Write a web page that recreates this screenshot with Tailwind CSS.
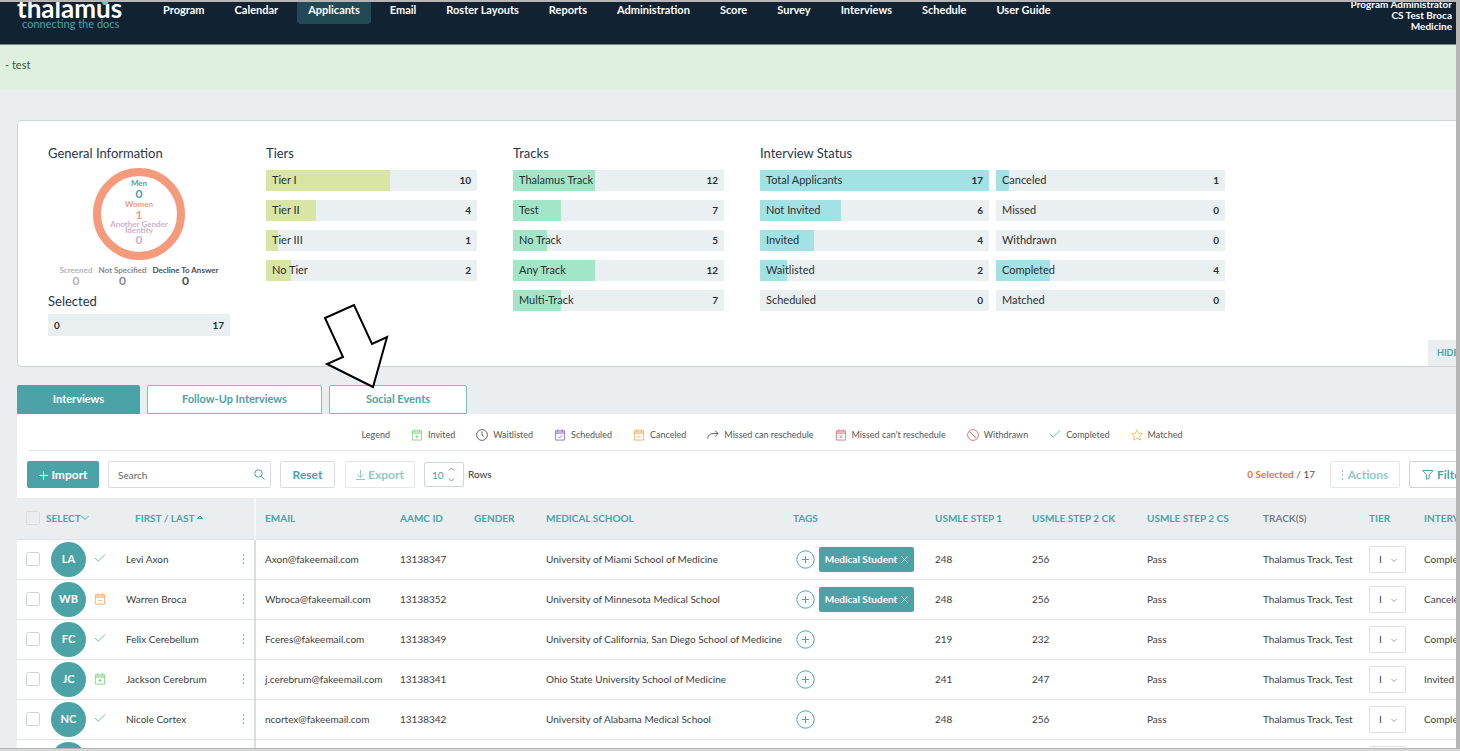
<!DOCTYPE html>
<html lang="en">
<head>
  <meta charset="UTF-8" />
  <meta name="viewport" content="width=device-width, initial-scale=1.0"/>
  <title>Thalamus - Applicants</title>
  <script src="https://cdn.jsdelivr.net/npm/@tailwindcss/browser@4"></script>
</head>
<body class="h-screen overflow-hidden border-b-2 border-[#d6d6d6] bg-[#b6b6b6] pt-[2px] pr-1 pb-px font-['Lato',sans-serif] text-[10px] text-[#3c3c3c]">

<!-- icons -->
<svg class="hidden">
  <symbol id="i-cal" viewBox="0 0 12 13"><path d="M1 2h10v10H1zM1 4.500h10M3.500 .3V3M8.500 .3V3"/><path d="M1 2h10v2.500H1z" fill="currentColor" fill-opacity=".3" stroke="none"/></symbol>
  <symbol id="i-invited" viewBox="0 0 12 13"><use href="#i-cal"/><path d="M6 6.300v4M4 8.300h4"/></symbol>
  <symbol id="i-scheduled" viewBox="0 0 12 13"><use href="#i-cal"/><path d="M4 8.200l1.500 1.500L8.300 6.800"/></symbol>
  <symbol id="i-canceled" viewBox="0 0 12 13"><use href="#i-cal"/><path d="M4 8.300h4"/></symbol>
  <symbol id="i-noresched" viewBox="0 0 12 13"><use href="#i-cal"/><path d="M4.500 6.800l3 3M7.500 6.800l-3 3"/></symbol>
  <symbol id="i-waitlisted" viewBox="0 0 12 12"><circle cx="6" cy="6" r="5.400"/><path d="M6 2.500V6l2 1.500"/></symbol>
  <symbol id="i-missed" viewBox="0 0 12 12"><path d="M.6 9.500C1 6 3.500 4.500 7 4.500h4M8 1.500l3.200 3L8 7.500"/></symbol>
  <symbol id="i-withdrawn" viewBox="0 0 12 12"><circle cx="6" cy="6" r="5.400"/><path d="M2.200 2.200l7.600 7.600"/></symbol>
  <symbol id="i-completed" viewBox="0 0 12 12"><path d="M1 5l3.200 3.200L11 1.500"/></symbol>
  <symbol id="i-matched" viewBox="0 0 12 12"><path d="M6 .8l1.600 3.400 3.800.4-2.800 2.600.8 3.900L6 9.200l-3.400 1.900.8-3.900L.6 4.600l3.800-.4z"/></symbol>
</svg>

<div class="h-full overflow-hidden bg-[#eaeef0]">

  <header class="flex h-[43px] items-start border-b border-[#6f8a80] bg-[#112233] font-bold text-white">
    <div class="relative ml-[17px] w-[135px]">
      <div class="-mt-[6px] text-[26px] leading-[25px]">thalamus</div>
      <div class="-mt-[3px] ml-[5px] text-[11px] leading-[12px] font-normal text-[#4ba3a7]">connecting the docs</div>
      <span class="absolute top-0 left-[85px] h-[3px] w-[6px] rounded-b-full bg-[#6fc3c8]"></span>
    </div>
    <nav class="flex gap-2 text-[11px] leading-4">
      <a href="#" class="px-[11px] pb-[6px]">Program</a>
      <a href="#" class="px-[11px] pb-[6px]">Calendar</a>
      <a href="#" class="rounded-b-sm bg-[#234856] px-[11px] pb-[6px]">Applicants</a>
      <a href="#" class="px-[11px] pb-[6px]">Email</a>
      <a href="#" class="px-[11px] pb-[6px]">Roster Layouts</a>
      <a href="#" class="px-[11px] pb-[6px]">Reports</a>
      <a href="#" class="px-[11px] pb-[6px]">Administration</a>
      <a href="#" class="px-[11px] pb-[6px]">Score</a>
      <a href="#" class="px-[11px] pb-[6px]">Survey</a>
      <a href="#" class="px-[11px] pb-[6px]">Interviews</a>
      <a href="#" class="px-[11px] pb-[6px]">Schedule</a>
      <a href="#" class="px-[11px] pb-[6px]">User Guide</a>
    </nav>
    <div class="-mt-[3px] mr-1 ml-auto text-right text-[10px] leading-[11px]">Program Administrator<br>CS Test Broca<br>Medicine</div>
  </header>

  <div class="flex h-[45px] items-center bg-[#dff1de] px-[5px] pb-1 text-[11px] text-[#2f5a3c]">- test</div>

  <main class="min-w-[1544px] px-[17px] pt-[30px]">

    <section class="relative flex h-[247px] rounded border border-[#cdd3d7] bg-white pt-6 pl-[30px] text-[11px] text-[#2b2f33]">
      <div class="mr-9 w-[182px]">
        <h2 class="text-[13px] leading-4 text-[#26364a]">General Information</h2>
        <div class="mx-auto mt-[7px] flex h-[92px] w-[92px] flex-col items-center rounded-full border-8 border-[#f59a7b] pt-[3px] text-center text-[8px] leading-[8px] font-bold whitespace-nowrap">
          <div class="text-[#4ba3a7]">Men<div class="text-[12px] leading-[13px]">0</div></div>
          <div class="text-[#f59a7b]">Women<div class="text-[12px] leading-[13px]">1</div></div>
          <div class="leading-[6px] text-[#cdb0d0]">Another Gender<br>Identity<div class="text-[12px] leading-[13px]">0</div></div>
        </div>
        <div class="mt-[5px] flex justify-center gap-[6px] text-center text-[8px] leading-[10px] font-bold">
          <div class="text-[#b0b3b6]">Screened<div class="text-[12px] leading-[11px]">0</div></div>
          <div class="text-[#85888b]">Not Specified<div class="text-[12px] leading-[11px]">0</div></div>
          <div class="text-[#4a4d50]">Decline To Answer<div class="text-[12px] leading-[11px]">0</div></div>
        </div>
        <h2 class="mt-[7px] text-[13px] leading-4 text-[#26364a]">Selected</h2>
        <div class="mt-[5px] flex h-[22px] items-center justify-between bg-[#eaeff2] px-[6px] text-[10px] font-bold"><span>0</span><span>17</span></div>
      </div>
      <div class="mr-9 w-[211px]">
        <h2 class="text-[13px] leading-4 text-[#26364a]">Tiers</h2>
        <div id="tiers" class="mt-[9px] grid gap-[9px]"></div>
      </div>
      <div class="mr-9 w-[211px]">
        <h2 class="text-[13px] leading-4 text-[#26364a]">Tracks</h2>
        <div id="tracks" class="mt-[9px] grid gap-[9px]"></div>
      </div>
      <div class="w-[465px]">
        <h2 class="text-[13px] leading-4 text-[#26364a]">Interview Status</h2>
        <div id="statuses" class="mt-[9px] grid grid-flow-col grid-cols-2 grid-rows-5 gap-x-[7px] gap-y-[9px]"></div>
      </div>
      <button class="absolute right-0 bottom-0 h-[26px] w-[98px] bg-[#eaeef0] pl-[9px] text-left text-[9px] font-bold text-[#4ba3a7]">HIDE METRICS</button>

      <!-- pointer to the Social Events tab -->
      <svg class="absolute top-[182px] left-[305px]" width="66" height="87" fill="#fff" stroke="#000" stroke-width="2">
        <path d="M2 15L31 2l18 39 15-7-14 50L4 61l16-7z"/>
      </svg>
    </section>

    <div class="mt-[18px] flex gap-[7px] text-[11px] font-bold">
      <button class="h-[29px] w-[123px] rounded-t-xs bg-[#4ba3a7] text-white">Interviews</button>
      <button class="h-[29px] w-[175px] rounded-t-xs border border-[#7fbcbf] bg-white text-[#4ba3a7]">Follow-Up Interviews</button>
      <button class="h-[29px] w-[138px] rounded-t-xs border border-[#7fbcbf] bg-white text-[#4ba3a7]">Social Events</button>
    </div>

    <section class="bg-white">
      <div id="legend" class="mx-[10px] flex h-[37px] items-center justify-center gap-[21px] border-b border-[#e3e6e9] pt-[5px] text-[9px] text-[#555]">
        <span>Legend</span>
      </div>

      <div class="flex h-[47px] items-center px-[10px] text-[12px] font-bold text-[#4ba3a7]">
        <button class="flex h-[27px] w-[72px] items-center justify-center gap-[3px] rounded-xs bg-[#4ba3a7] text-white">
          <svg width="10" height="10" fill="none" stroke="currentColor" stroke-opacity=".8"><path d="M5.500 1v9M1 5.500h9"/></svg>Import
        </button>
        <div class="relative ml-[9px]">
          <input type="text" placeholder="Search" aria-label="Search" class="h-[27px] w-[163px] rounded-xs border border-[#d8dce0] pl-[9px] text-[10px] font-normal placeholder:text-[#666]">
          <svg class="absolute top-2 right-[6px]" width="11" height="11" fill="none" stroke="currentColor"><circle cx="4.500" cy="4.500" r="3.700"/><path d="M7.300 7.300l3.200 3.200"/></svg>
        </div>
        <button class="ml-[9px] h-[27px] w-[55px] rounded-xs border border-[#d8dce0]">Reset</button>
        <button disabled class="ml-[10px] flex h-[27px] w-[70px] items-center justify-center gap-[3px] rounded-xs border border-[#e4e7ea] text-[#93c8ca]">
          <svg width="9" height="10" fill="none" stroke="currentColor"><path d="M4.500 0v7.500M1.500 4.500l3 3 3-3M0 9.500h9"/></svg>Export
        </button>
        <div class="relative ml-[9px]">
          <input id="rows" type="text" value="10" class="h-[25px] w-10 rounded-xs border border-[#cfd4d8] pl-[7px] text-[10px] font-normal">
          <svg class="absolute top-[5px] right-[9px]" width="7" height="15" fill="none" stroke="#888"><path d="M1 3.500l2.500-2.500L6 3.500M1 11.500L3.500 14 6 11.500"/></svg>
        </div>
        <label for="rows" class="ml-1 text-[10px] font-normal text-[#333]">Rows</label>
        <div class="ml-auto text-[10px] font-normal text-[#555]"><span class="font-bold text-[#e8733d]">0 Selected</span> / 17</div>
        <button disabled class="ml-[15px] flex h-[27px] w-[70px] items-center justify-center gap-1 rounded-xs border border-[#e4e7ea] text-[#93c8ca]">
          <svg width="2" height="10" fill="currentColor"><path d="M0 0h1v2H0zM0 4h1v2H0zM0 8h1v2H0z"/></svg>Actions
        </button>
        <button class="ml-[9px] flex h-[27px] w-[108px] items-center gap-[3px] rounded-xs border border-[#cfd4d8] pl-3">
          <svg width="12" height="10" fill="none" stroke="currentColor"><path d="M.8.500h10.200L7.200 5v3.500l-2.600.8V5z"/></svg>Filter Options
        </button>
      </div>

      <table class="w-full table-fixed text-left whitespace-nowrap">
        <colgroup>
          <col class="w-[99px]"><col class="w-[139px]"><col class="w-[136px]"><col class="w-[74px]"><col class="w-[72px]">
          <col class="w-[247px]"><col class="w-[142px]"><col class="w-[97px]"><col class="w-[115px]"><col class="w-[116px]">
          <col class="w-[106px]"><col class="w-[55px]"><col class="w-[112px]">
        </colgroup>
        <thead class="bg-[#eaeef0] text-[10px] font-bold text-[#4ba3a7]">
          <tr class="h-[41px] border-b border-[#dfe3e6]">
            <th class="pl-[9px]">
              <div class="flex items-center">
                <input type="checkbox" aria-label="Select all" class="mr-[6px] h-[14px] w-[14px] appearance-none rounded-xs border border-[#d8dce0]">
                SELECT
                <svg width="8" height="6" fill="none" stroke="currentColor"><path d="M.5 1L4 4.500 7.500 1"/></svg>
              </div>
            </th>
            <th class="border-r-2 border-[#f6f8f9] pl-[19px]">FIRST / LAST <svg class="-mt-1 inline" width="6" height="5" fill="none" stroke="currentColor"><path d="M.5 3.500h5L3 1z"/></svg></th>
            <th class="pl-[9px]">EMAIL</th>
            <th class="pl-[9px]">AAMC ID</th>
            <th class="pl-[9px]">GENDER</th>
            <th class="pl-[9px]">MEDICAL SCHOOL</th>
            <th class="pl-[9px]">TAGS</th>
            <th class="pl-[9px]">USMLE STEP 1</th>
            <th class="pl-[9px]">USMLE STEP 2 CK</th>
            <th class="pl-[9px]">USMLE STEP 2 CS</th>
            <th class="pl-[9px] text-[#7b7f83]">TRACK(S)</th>
            <th class="pl-[9px]">TIER</th>
            <th class="pl-[9px]">INTERVIEW STATUS</th>
          </tr>
        </thead>
        <tbody id="applicants"></tbody>
      </table>
    </section>
  </main>
</div>

<script>
  const bar = (label, count, pct, color) => `
    <div class="flex h-[21px] bg-[#eaeff2]">
      <div class="${color} h-full shrink-0" style="width:${pct}%"></div>
      <div class="flex w-full shrink-0 items-center justify-between px-[6px]" style="margin-left:-${pct}%">
        <span>${label}</span><span class="text-[10px] font-bold">${count}</span>
      </div>
    </div>`;

  const fill = (id, total, color, items) => {
    document.getElementById(id).innerHTML = items.map(([l, n]) => bar(l, n, n / total * 100, color)).join('');
  };

  fill('tiers', 17, 'bg-[#d8e5a4]', [['Tier I', 10], ['Tier II', 4], ['Tier III', 1], ['No Tier', 2]]);
  fill('tracks', 31, 'bg-[#a2e5c7]', [['Thalamus Track', 12], ['Test', 7], ['No Track', 5], ['Any Track', 12], ['Multi-Track', 7]]);
  fill('statuses', 17, 'bg-[#a2e2e5]', [
    ['Total Applicants', 17], ['Not Invited', 6], ['Invited', 4], ['Waitlisted', 2], ['Scheduled', 0],
    ['Canceled', 1], ['Missed', 0], ['Withdrawn', 0], ['Completed', 4], ['Matched', 0]
  ]);

  const colors = {
    invited: 'text-[#84d684]', waitlisted: 'text-[#666666]', scheduled: 'text-[#8f70d8]',
    canceled: 'text-[#fbab60]', missed: 'text-[#666666]', noresched: 'text-[#ea7378]',
    withdrawn: 'text-[#ea7378]', completed: 'text-[#6fbcc0]', matched: 'text-[#f5c55a]'
  };
  const icon = (name) => `<svg class="h-3 w-3 ${colors[name]}" fill="none" stroke="currentColor"><use href="#i-${name}"/></svg>`;

  const legend = [
    ['invited', 'Invited'], ['waitlisted', 'Waitlisted'], ['scheduled', 'Scheduled'], ['canceled', 'Canceled'],
    ['missed', 'Missed can reschedule'], ['noresched', "Missed can't reschedule"], ['withdrawn', 'Withdrawn'],
    ['completed', 'Completed'], ['matched', 'Matched']
  ];
  document.getElementById('legend').innerHTML += legend
    .map(([i, t]) => `<span class="flex items-center gap-[5px]">${icon(i)}${t}</span>`).join('');

  const applicants = [
    ['LA', 'completed', 'Levi Axon', 'Axon@fakeemail.com', '13138347', 'University of Miami School of Medicine', true, 248, 256, 'Completed'],
    ['WB', 'canceled', 'Warren Broca', 'Wbroca@fakeemail.com', '13138352', 'University of Minnesota Medical School', true, 248, 256, 'Canceled'],
    ['FC', 'completed', 'Felix Cerebellum', 'Fceres@fakeemail.com', '13138349', 'University of California, San Diego School of Medicine', false, 219, 232, 'Completed'],
    ['JC', 'invited', 'Jackson Cerebrum', 'j.cerebrum@fakeemail.com', '13138341', 'Ohio State University School of Medicine', false, 241, 247, 'Invited'],
    ['NC', 'completed', 'Nicole Cortex', 'ncortex@fakeemail.com', '13138342', 'University of Alabama Medical School', false, 248, 256, 'Completed'],
    ['', 'completed', '', '', '', '', false, '', '', '']
  ];

  document.getElementById('applicants').innerHTML = applicants.map(([initials, status, name, email, aamc, school, tagged, s1, s2, state]) => `
    <tr class="h-10 border-b border-[#e3e7ea]">
      <td class="pl-[9px]">
        <div class="flex items-center">
          <input type="checkbox" aria-label="Select ${name}" class="h-[14px] w-[14px] appearance-none rounded-xs border border-[#cfd4d8]">
          <span class="mr-2 ml-[11px] flex h-[35px] w-[35px] items-center justify-center rounded-full bg-[#4ba3a7] text-[11px] font-bold text-white">${initials}</span>
          ${icon(status)}
        </div>
      </td>
      <td class="border-r-2 border-[#d8dde1] pr-[9px] pl-[10px]">
        <div class="flex items-center justify-between">${name}
          <svg width="2" height="10" fill="#6fbcc0"><path d="M0 0h1v2H0zM0 4h1v2H0zM0 8h1v2H0z"/></svg>
        </div>
      </td>
      <td class="pl-[9px]">${email}</td>
      <td class="pl-[9px]">${aamc}</td>
      <td></td>
      <td class="pl-[9px]">${school}</td>
      <td class="pl-[12px]">
        <div class="flex items-center gap-1">
          <button aria-label="Add tag"><svg width="19" height="19" fill="none" stroke="#4ba3a7"><circle cx="9.500" cy="9.500" r="8.700"/><path d="M9.500 6v7M6 9.500h7"/></svg></button>
          ${tagged ? `<span class="flex h-[25px] w-[95px] items-center justify-center gap-1 rounded-xs bg-[#4ba3a7] font-bold text-white">Medical Student
            <button aria-label="Remove tag"><svg width="7" height="7" fill="none" stroke="currentColor"><path d="M.5.5l6 6M6.500.5l-6 6"/></svg></button></span>` : ''}
        </div>
      </td>
      <td class="pl-[9px]">${s1}</td>
      <td class="pl-[9px]">${s2}</td>
      <td class="pl-[9px]">${name && 'Pass'}</td>
      <td class="pl-[9px]">${name && 'Thalamus Track, Test'}</td>
      <td class="pl-[9px]">
        <div class="relative w-[37px]">
          <select aria-label="Tier" class="block h-[27px] w-[37px] appearance-none rounded-xs border border-[#dde1e4] bg-white pl-[9px]"><option>I</option><option>II</option></select>
          <svg class="absolute top-[12px] right-[9px]" width="6" height="5" fill="none" stroke="#999"><path d="M.5 1L3 3.500 5.500 1"/></svg>
        </div>
      </td>
      <td class="pl-[9px]">${state}</td>
    </tr>`).join('');
</script>

</body>
</html>
